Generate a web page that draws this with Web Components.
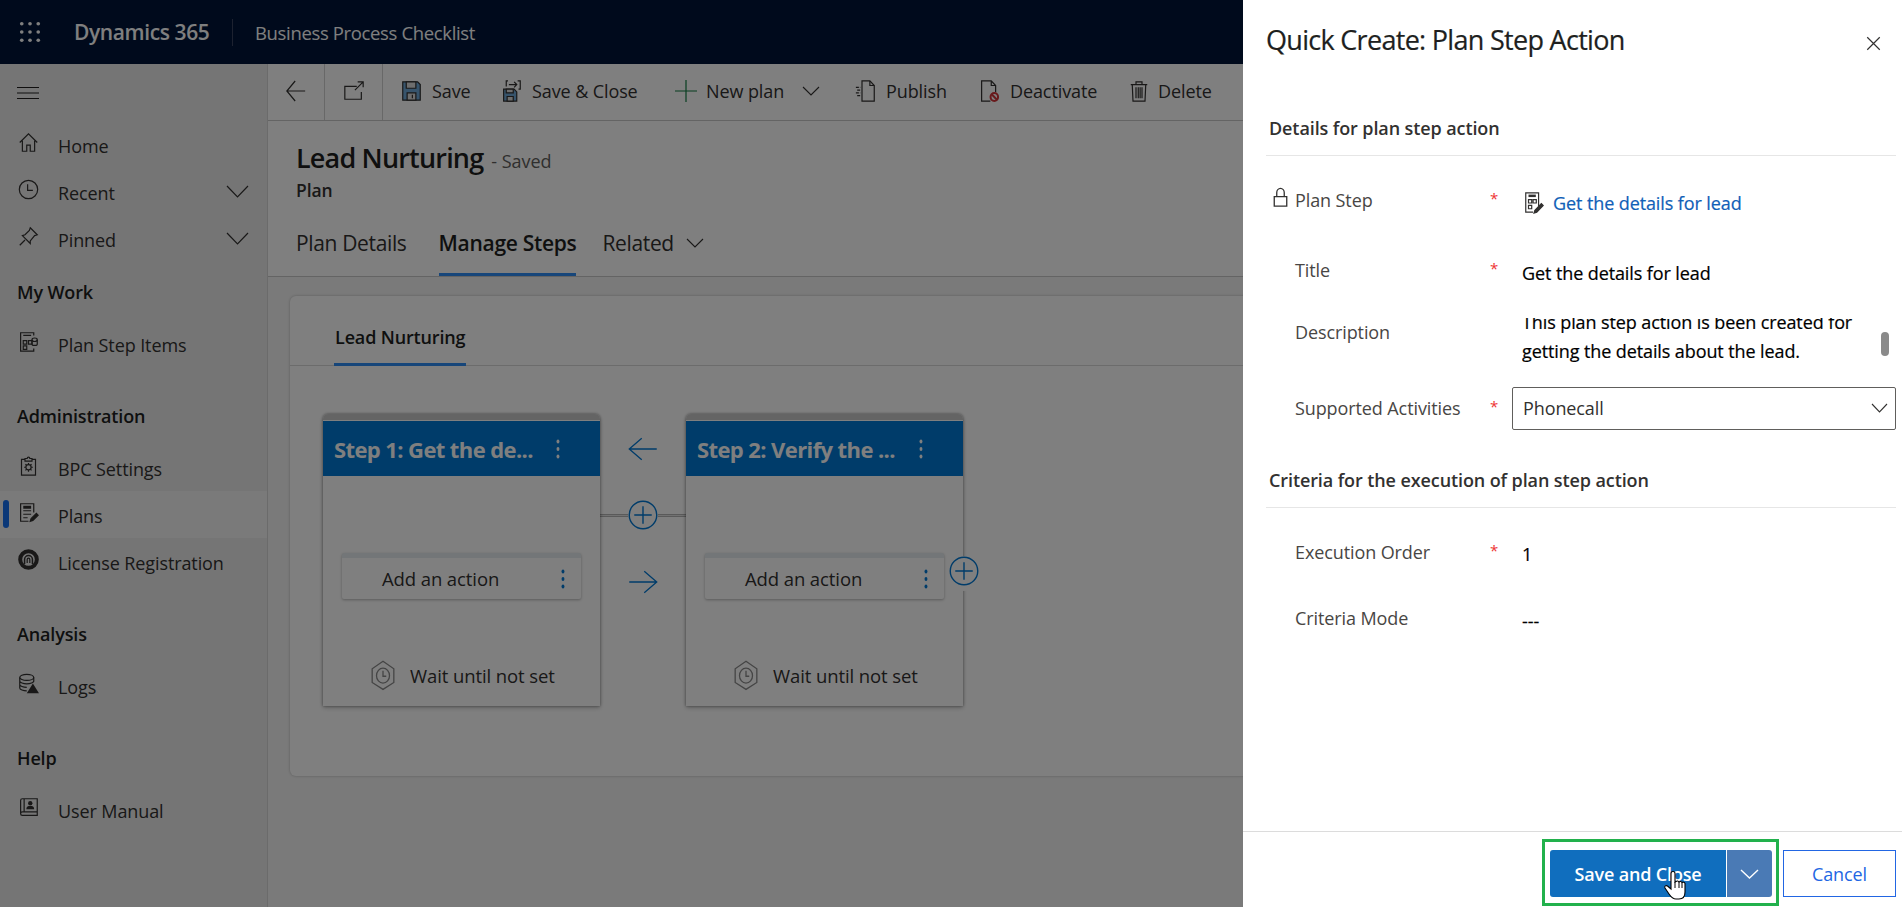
<!DOCTYPE html>
<html lang="en">
<head>
<meta charset="utf-8">
<title>Business Process Checklist</title>
<style>
    html, body { margin: 0; height: 100%; overflow: hidden; }
    body { font-family: "Open Sans", "Noto Sans", sans-serif; color: #323130; }
</style>
</head>
<body>
<dyn-shell>
    <dyn-header slot="header"></dyn-header>
    <dyn-nav slot="nav">
        <nav-item icon="home">Home</nav-item>
        <nav-item icon="recent" chevron>Recent</nav-item>
        <nav-item icon="pin" chevron>Pinned</nav-item>
        <nav-group first label="My Work">
            <nav-item icon="stepitems">Plan Step Items</nav-item>
        </nav-group>
        <nav-group label="Administration">
            <nav-item icon="settings">BPC Settings</nav-item>
            <nav-item icon="plans" selected>Plans</nav-item>
            <nav-item icon="license">License Registration</nav-item>
        </nav-group>
        <nav-group label="Analysis">
            <nav-item icon="logs">Logs</nav-item>
        </nav-group>
        <nav-group label="Help">
            <nav-item icon="manual">User Manual</nav-item>
        </nav-group>
    </dyn-nav>
    <dyn-main slot="main"></dyn-main>
    <quick-create slot="panel"></quick-create>
</dyn-shell>

<script>
// icon shapes, all on a 24 box
const ICONS = {
    grid: '<g fill="currentColor" stroke="none"><circle cx="3" cy="3" r="2"/><circle cx="12" cy="3" r="2"/><circle cx="21" cy="3" r="2"/><circle cx="3" cy="12" r="2"/><circle cx="12" cy="12" r="2"/><circle cx="21" cy="12" r="2"/><circle cx="3" cy="21" r="2"/><circle cx="12" cy="21" r="2"/><circle cx="21" cy="21" r="2"/></g>',
    menu: '<path d="M0 1h24M0 12h24M0 23h24"/>',
    home: '<path d="M2 12 12 2l10 10M5 10v12h5v-7h4v7h5V10"/>',
    recent: '<circle cx="12" cy="12" r="10.500"/><path d="M11 6v7h6"/>',
    pin: '<path d="M14 2 22 10 19 11 14 17 14 20 5 11 8 10 13 5ZM8 16 2 22"/>',
    chevron: '<path d="M0 0 12 24 24 0"/>',
    stepitems: '<path d="M18 5V2H3v21h15v-3"/><path d="M6 5h9M6 11h4v4H6zM12 11h4v4h-4zM6 17h4v4H6z"/><ellipse cx="19" cy="10" rx="3" ry="2"/><path d="M16 10v5c0 2 6 2 6 0v-5"/>',
    settings: '<path d="M8 5H4v18h16V5h-4"/><path d="M8 7V4h2.500a1.500 1.500 0 0 1 3 0H16v3z"/><circle cx="12" cy="14" r="3"/><path d="M12 9v2M12 17v2M7 14h2M15 14h2M8.500 10.500l1.400 1.400M14.100 16.100l1.400 1.400M8.500 17.500l1.400-1.400M14.100 11.900l1.400-1.400"/>',
    plans: '<path d="M18 12V2H3v20h9"/><path d="M6 6h9" stroke-width="3"/><path d="M6 10h9M6 14h9M6 18h5"/><path d="M14 22l1-3 6-6 2 2-6 6z" fill="currentColor"/>',
    license: '<circle cx="12" cy="12" r="9.500" stroke-width="4"/><path d="M7.500 17v-5a4.500 4.500 0 0 1 9 0v5" stroke-width="1.500"/><path d="M10.500 16v-4a1.500 1.500 0 0 1 3 0v4" stroke-width="1.200"/>',
    logs: '<ellipse cx="10" cy="5" rx="8" ry="3.500"/><path d="M2 5v12c0 2 4 3.500 8 3.500M18 5v5M2 9c0 2 4 3.500 8 3.500s8-1.500 8-3.500M2 13c0 2 4 3.500 8 3.500"/><path d="M17 12l7 11H10z" fill="currentColor" stroke="none"/>',
    manual: '<path d="M5 2h17v19H5a2 2 0 0 1-2-2V4a2 2 0 0 1 2-2zM3 19a2 2 0 0 1 2-2h17M7 2v15"/><circle cx="14" cy="7" r="2.500" fill="currentColor" stroke="none"/><path d="M9.500 14c0-3 2-4 4.500-4s4.500 1 4.500 4z" fill="currentColor" stroke="none"/>',
    back: '<path d="M23 12H1M11 2 1 12l10 10"/>',
    forward: '<path d="M1 12h22M13 2l10 10-10 10"/>',
    popout: '<path d="M15 7H2v14h18v-8"/><path d="M13 11 22 2M16 2h6v6"/>',
    save: '<path d="M2 2h17l3 3v17H2z" fill="#6fa8d8"/><path d="M6 2h11v7H6z" fill="#dcdcdc"/><path d="M7 22v-8h10v8z" fill="#dcdcdc"/><path d="M13 16v4"/>',
    saveclose: '<path d="M3 10h12l3 3v10H3z" fill="#6fa8d8"/><path d="M6 10h8v4H6zM7 23v-5h7v5z" fill="#dcdcdc"/><path d="M9 5h9M15 2l3 3-3 3M19 1h3v9h-2M8 1H6v6"/>',
    plus: '<path d="M12 0v24M0 12h24"/>',
    publish: '<path d="M8 1h9l5 5v17H8z"/><path d="M17 1v5h5"/><path d="M1 8h5M2.500 11h3.500M1 14h5M2.500 17h3.500" stroke-dasharray="3 1"/>',
    deactivate: '<path d="M13 23H3V1h11l5 5v7M14 1v5h5"/><circle cx="17.500" cy="18.500" r="4.300" stroke="#d13438" stroke-width="2"/><path d="M14.500 15.500l6 6" stroke="#d13438" stroke-width="2"/>',
    trash: '<path d="M1 5h22M8 5V2h8v3M3 5l1 18h16l1-18M8 8v12M11 8v12M13.500 8v12M16 8v12"/>',
    lock: '<path d="M2 11h20v12H2zM6 11V6a6 5.500 0 0 1 12 0v5"/>',
    close: '<path d="M2 2l20 20M22 2 2 22"/>',
    record: '<path d="M17 15V1H3v20h8"/><path d="M6 4h8" stroke-width="2.500"/><path d="M6 8h3.500v3.500H6zM11 8h3.500v3.500H11zM6 14h3.500v3.500H6z"/><path d="M12 22l1-3 7-7 2 2-7 7z" fill="currentColor"/>',
    hex: '<path d="M12 1 22 7v11l-10 5.500L2 18V7z"/><circle cx="12" cy="12.500" r="6"/><path d="M12 8.500v4.500h3"/>',
    dots: '<g fill="currentColor" stroke="none"><circle cx="12" cy="3" r="2.500"/><circle cx="12" cy="12" r="2.500"/><circle cx="12" cy="21" r="2.500"/></g>',
    addcircle: '<circle cx="12" cy="12" r="11"/><path d="M12 5v14M5 12h14"/>'
};

class DynIcon extends HTMLElement {
    connectedCallback() {
        const w = this.getAttribute('w') || 22;
        const h = this.getAttribute('h') || w;
        const sw = this.getAttribute('sw') || 1.2;
        this.attachShadow({ mode: 'open' });
        this.shadowRoot.innerHTML = `
            <style>
                :host { display: inline-flex; flex: none; }
                svg { display: block; overflow: visible; }
                svg * { vector-effect: non-scaling-stroke; } /* icons get stretched, keep the line even */
            </style>
            <svg width="${w}" height="${h}" viewBox="0 0 24 24" preserveAspectRatio="none" fill="none" stroke="currentColor" stroke-width="${sw}">${ICONS[this.getAttribute('name')] || ''}</svg>`;
    }
}
customElements.define('dyn-icon', DynIcon);

class DynShell extends HTMLElement {
    constructor() {
        super();
        this.attachShadow({ mode: 'open' });
        this.shadowRoot.innerHTML = `
            <style>
                :host { display: flex; flex-direction: column; position: relative; width: 1902px; height: 907px; overflow: hidden; }
                .row { display: flex; flex: 1; min-height: 0; }
                .dim { position: absolute; inset: 0; background: rgba(0, 0, 0, .5); }
                .panel { position: absolute; top: 0; right: 0; bottom: 0; width: 659px; }
            </style>
            <slot name="header"></slot>
            <div class="row"><slot name="nav"></slot><slot name="main"></slot></div>
            <div class="dim"></div>
            <div class="panel"><slot name="panel"></slot></div>`;
    }
}
customElements.define('dyn-shell', DynShell);

class DynHeader extends HTMLElement {
    constructor() {
        super();
        this.attachShadow({ mode: 'open' });
        this.shadowRoot.innerHTML = `
            <style>
                :host { display: flex; align-items: center; height: 64px; background: #001538; color: #fff; }
                dyn-icon { margin: 0 33px 0 19px; }
                .brand { font-size: 21px; font-weight: 600; letter-spacing: -.4px; width: 137px; white-space: nowrap; }
                .sep { width: 1px; height: 27px; background: #3a4560; margin: 0 22px 0 21px; }
                .app { font-size: 18.500px; letter-spacing: -.35px; white-space: nowrap; }
            </style>
            <dyn-icon name="grid" w="22"></dyn-icon>
            <span class="brand">Dynamics 365</span>
            <span class="sep"></span>
            <span class="app">Business Process Checklist</span>`;
    }
}
customElements.define('dyn-header', DynHeader);

class DynNav extends HTMLElement {
    constructor() {
        super();
        this.attachShadow({ mode: 'open' });
        this.shadowRoot.innerHTML = `
            <style>
                :host { display: block; flex: none; width: 267px; background: #ebebeb; border-right: 1px solid #d6d6d6; }
                .burger { height: 57px; display: flex; align-items: center; padding-left: 17px; box-sizing: border-box; color: #201f1e; }
            </style>
            <div class="burger"><dyn-icon name="menu" w="22" h="12" sw="1.200"></dyn-icon></div>
            <slot></slot>`;
    }
}
customElements.define('dyn-nav', DynNav);

class NavGroup extends HTMLElement {
    constructor() {
        super();
        this.attachShadow({ mode: 'open' });
        this.shadowRoot.innerHTML = `
            <style>
                :host { display: block; margin-top: 20px; }
                :host([first]) { margin-top: 1px; }
                .label { height: 57px; line-height: 59px; padding-left: 17px; font-size: 18px; font-weight: 600; letter-spacing: -.15px; color: #201f1e; }
            </style>
            <div class="label"></div>
            <slot></slot>`;
    }
    connectedCallback() {
        this.shadowRoot.querySelector('.label').textContent = this.getAttribute('label');
    }
}
customElements.define('nav-group', NavGroup);

class NavItem extends HTMLElement {
    constructor() {
        super();
        this.attachShadow({ mode: 'open' });
        this.shadowRoot.innerHTML = `
            <style>
                :host { display: flex; align-items: center; position: relative; height: 47px; font-size: 18px; letter-spacing: -.1px; color: #323130; }
                :host([selected]) { background: #f5f5f5; }
                :host([selected]) .bar { position: absolute; left: 3px; top: 9px; width: 6px; height: 28px; border-radius: 3px; background: #1670f0; }
                .ic { margin-left: 18px; width: 40px; flex: none; }
                .text { flex: 1; white-space: nowrap; padding-top: 2px; }
                .chev { margin-right: 19px; }
            </style>
            <span class="bar"></span>
            <span class="ic"></span>
            <span class="text"><slot></slot></span>`;
    }
    connectedCallback() {
        this.shadowRoot.querySelector('.ic').innerHTML = `<dyn-icon name="${this.getAttribute('icon')}" w="21" sw="1.200"></dyn-icon>`;
        if (this.hasAttribute('chevron')) {
            this.shadowRoot.innerHTML += '<dyn-icon class="chev" name="chevron" w="21" h="11" sw="1.200"></dyn-icon>';
        }
    }
}
customElements.define('nav-item', NavItem);

class CmdButton extends HTMLElement {
    constructor() {
        super();
        this.attachShadow({ mode: 'open' });
        this.shadowRoot.innerHTML = `
            <style>
                :host { display: flex; align-items: center; flex: none; box-sizing: border-box; padding: 0 0 2px 18px; height: 100%; font-size: 18px; letter-spacing: -.1px; white-space: nowrap; color: #323130; }
                .ic { display: inline-flex; margin-right: 10px; }
                .chev { margin-left: 19px; display: inline-flex; }
            </style>
            <span class="ic"></span><slot></slot><span class="chev"></span>`;
    }
    connectedCallback() {
        const ic = this.getAttribute('icon');
        const color = this.getAttribute('tint') || 'currentColor';
        this.style.width = (this.getAttribute('w') || 100) + 'px';
        this.shadowRoot.querySelector('.ic').innerHTML = `<dyn-icon name="${ic}" w="${this.getAttribute('iw') || 21}" h="22" sw="1.200" style="color:${color}"></dyn-icon>`;
        if (this.hasAttribute('menu')) {
            this.shadowRoot.querySelector('.ic').style.marginRight = '9px';
            this.shadowRoot.querySelector('.chev').innerHTML = '<dyn-icon name="chevron" w="16" h="8" sw="1.100"></dyn-icon>';
        }
    }
}
customElements.define('cmd-button', CmdButton);

class StepCard extends HTMLElement {
    constructor() {
        super();
        this.attachShadow({ mode: 'open' });
        this.shadowRoot.innerHTML = `
            <style>
                :host { display: flex; flex-direction: column; position: relative; flex: none; box-sizing: border-box; width: 277px; height: 292px; background: #fff; border-radius: 5px 5px 0 0; box-shadow: 0 0 3px rgba(0,0,0,.45), 0 2px 5px rgba(0,0,0,.2); }
                .top { height: 6px; background: #c9c9c9; border-radius: 5px 5px 0 0; flex: none; }
                .head { display: flex; align-items: center; height: 55px; margin-top: 1px; padding-left: 11px; background: #0078d4; color: #fff; font-size: 22px; font-weight: 700; letter-spacing: -.6px; flex: none; white-space: nowrap; }
                .head span { width: 217px; }
                .action { display: flex; align-items: center; box-sizing: border-box; margin: 77px 19px 0; height: 46px; border-top: 5px solid #e6ecf0; border-radius: 2px; box-shadow: 0 1px 3px rgba(0,0,0,.3); background: #fff; color: #323130; font-size: 18.500px; letter-spacing: -.1px; flex: none; }
                .action span { flex: 1; padding-left: 40px; }
                .action dyn-icon { margin-right: 11px; color: #0078d4; }
                .wait { display: flex; align-items: center; margin: 61px 0 0 47px; font-size: 18.500px; letter-spacing: -.1px; color: #323130; white-space: nowrap; }
                .wait dyn-icon { margin-right: 14px; color: #8a8a8a; }
                .more { position: absolute; right: -16px; top: 142px; color: #0078d4; background: #fff; border-radius: 50%; display: none; }
                :host([last]) .more { display: block; }
            </style>
            <div class="top"></div>
            <div class="head"><span class="t"></span><dyn-icon name="dots" w="14" h="20"></dyn-icon></div>
            <div class="action"><span>Add an action</span><dyn-icon name="dots" w="14" h="20"></dyn-icon></div>
            <div class="wait"><dyn-icon name="hex" w="26" h="30" sw="1.300"></dyn-icon><span>Wait until not set</span></div>
            <div class="more"><dyn-icon name="addcircle" w="30" sw="1.400"></dyn-icon></div>`;
    }
    connectedCallback() {
        this.shadowRoot.querySelector('.t').textContent = this.getAttribute('title');
    }
}
customElements.define('step-card', StepCard);

class DynMain extends HTMLElement {
    constructor() {
        super();
        this.attachShadow({ mode: 'open' });
        this.shadowRoot.innerHTML = `
            <style>
                :host { display: flex; flex-direction: column; flex: 1; min-width: 0; background: #f5f5f5; }
                .bar { display: flex; align-items: center; height: 56px; border-bottom: 1px solid #c8c8c8; background: #fff; flex: none; }
                .nav { display: flex; align-items: center; justify-content: center; height: 100%; padding-bottom: 2px; border-right: 1px solid #d0d0d0; color: #323130; box-sizing: border-box; }
                .head { background: #fff; height: 156px; box-sizing: border-box; border-bottom: 1px solid #c8c8c8; padding-left: 28px; flex: none; }
                .title { display: flex; align-items: baseline; height: 36px; padding-top: 18px; }
                h1 { margin: 0; font-size: 27px; font-weight: 600; letter-spacing: -.82px; color: #201f1e; white-space: nowrap; }
                .saved { margin-left: 8px; font-size: 18px; letter-spacing: -.05px; color: #605e5c; }
                .sub { font-size: 17.500px; font-weight: 600; letter-spacing: -.1px; color: #323130; line-height: 24px; margin-top: 3px; }
                .tabs { display: flex; align-items: center; margin-top: 8px; height: 66px; font-size: 21px; letter-spacing: -.35px; color: #323130; white-space: nowrap; }
                .tab { height: 100%; display: flex; align-items: center; box-sizing: border-box; }
                .tab.on { font-weight: 600; border-bottom: 3px solid #2f8cf5; color: #201f1e; padding-top: 3px; margin: 0 26px 0 32px; letter-spacing: -.3px; }
                .tabs dyn-icon { margin-left: 13px; }
                .card { margin: 19px 0 0 22px; height: 480px; background: #fff; border-radius: 6px; box-shadow: 0 0 3px rgba(0,0,0,.25); }
                .inner { display: flex; height: 70px; box-sizing: border-box; border-bottom: 1px solid #d8d8d8; padding-left: 44px; }
                .inner span { height: 70px; box-sizing: border-box; border-bottom: 3px solid #2f8cf5; padding: 0 1px; line-height: 82px; font-size: 18px; font-weight: 600; letter-spacing: -.15px; color: #201f1e; }
                .steps { display: flex; margin: 48px 0 0 33px; }
                .conn { display: flex; flex-direction: column; align-items: center; flex: none; width: 86px; color: #0078d4; height: 292px;
                    background: linear-gradient(#b4b4b4 0 1px, #e4e4e4 1px 2px, #b4b4b4 2px 3px) center 100px / 100% 3px no-repeat; }
                .conn dyn-icon:nth-child(1) { margin-top: 22px; }
                .conn dyn-icon:nth-child(2) { margin-top: 38px; background: #fff; border-radius: 50%; }
                .conn dyn-icon:nth-child(3) { margin-top: 39px; }
            </style>
            <div class="bar">
                <span class="nav" style="width:57px"><dyn-icon name="back" w="20" h="24"></dyn-icon></span>
                <span class="nav" style="width:58px"><dyn-icon name="popout" w="22"></dyn-icon></span>
                <cmd-button icon="save" w="100">Save</cmd-button>
                <cmd-button icon="saveclose" w="174">Save &amp; Close</cmd-button>
                <cmd-button icon="plus" tint="#107c41" w="180" iw="22" menu>New plan</cmd-button>
                <cmd-button icon="publish" w="124">Publish</cmd-button>
                <cmd-button icon="deactivate" w="151">Deactivate</cmd-button>
                <cmd-button icon="trash" w="120" iw="18">Delete</cmd-button>
            </div>
            <div class="head">
                <div class="title"><h1>Lead Nurturing</h1><span class="saved">- Saved</span></div>
                <div class="sub">Plan</div>
                <div class="tabs">
                    <span class="tab">Plan Details</span>
                    <span class="tab on">Manage Steps</span>
                    <span class="tab">Related</span>
                    <dyn-icon name="chevron" w="16" h="8" sw="1.100"></dyn-icon>
                </div>
            </div>
            <div class="card">
                <div class="inner"><span>Lead Nurturing</span></div>
                <div class="steps">
                    <step-card title="Step 1: Get the de..."></step-card>
                    <div class="conn">
                        <dyn-icon name="back" w="30" h="26" sw="1.300"></dyn-icon>
                        <dyn-icon name="addcircle" w="30" sw="1.400"></dyn-icon>
                        <dyn-icon name="forward" w="30" h="26" sw="1.300"></dyn-icon>
                    </div>
                    <step-card last title="Step 2: Verify the ..."></step-card>
                </div>
            </div>`;
    }
}
customElements.define('dyn-main', DynMain);

class FormRow extends HTMLElement {
    constructor() {
        super();
        this.attachShadow({ mode: 'open' });
        this.shadowRoot.innerHTML = `
            <style>
                :host { display: grid; grid-template-columns: 29px 200px 27px 1fr; align-items: center; font-size: 18px; letter-spacing: -.1px; }
                .lock { color: #323130; display: flex; padding: 0 0 6px 7px; }
                .label { color: #484644; white-space: nowrap; }
                .req { color: #e33; font-size: 15px; height: 20px; line-height: 22px; margin: -6px 0 0 -5px; }
                .value { min-width: 0; }
            </style>
            <span class="lock"></span>
            <span class="label"></span>
            <span class="req"></span>
            <div class="value"><slot></slot></div>`;
    }
    connectedCallback() {
        this.style.height = this.getAttribute('h') + 'px';
        this.shadowRoot.querySelector('.label').textContent = this.getAttribute('label');
        if (this.hasAttribute('required')) this.shadowRoot.querySelector('.req').textContent = '*';
        if (this.hasAttribute('locked')) this.shadowRoot.querySelector('.lock').innerHTML = '<dyn-icon name="lock" w="15" h="19" sw="1.300"></dyn-icon>';
    }
}
customElements.define('form-row', FormRow);

class QuickCreate extends HTMLElement {
    constructor() {
        super();
        this.attachShadow({ mode: 'open' });
        this.shadowRoot.innerHTML = `
            <style>
                :host { display: flex; flex-direction: column; height: 100%; box-sizing: border-box; background: #fff; color: #000; padding: 0 6px 0 23px; }
                .top { display: flex; align-items: center; height: 84px; flex: none; padding-bottom: 3px; box-sizing: border-box; }
                h2 { flex: 1; margin: -2px 0 0; font-size: 27px; font-weight: 400; letter-spacing: -.7px; color: #201f1e; white-space: nowrap; -webkit-text-stroke: .2px #201f1e; }
                .top dyn-icon { margin: 6px 15px 0 0; color: #323130; }
                .sec { box-sizing: border-box; border-bottom: 1px solid #e6e6e6; padding-left: 3px; line-height: 32px; font-size: 18px; font-weight: 600; letter-spacing: -.1px; color: #323130; flex: none; }
                .body { flex: 1; }
                .val { font-size: 18px; letter-spacing: -.1px; color: #000; white-space: nowrap; -webkit-text-stroke: .2px currentColor; }
                .link { display: flex; align-items: center; padding-top: 6px; color: #1160b7; }
                .link dyn-icon { margin: 0 8px 0 1px; color: #323130; }
                .desc { display: flex; justify-content: space-between; height: 50px; margin-top: 22px; overflow: hidden; padding-right: 7px; }
                .desc p { margin: -10px 0 0; line-height: 29px; }
                .thumb { width: 8px; height: 24px; margin-top: 14px; border-radius: 4px; background: #8a8a8a; }
                .select { display: flex; align-items: center; justify-content: space-between; box-sizing: border-box; height: 43px; margin-left: -10px; padding: 0 8px 0 10px; border: 1px solid #605e5c; border-radius: 2px; font-size: 18px; letter-spacing: -.1px; color: #323130; }
                .foot { display: flex; flex: none; height: 76px; box-sizing: border-box; margin: 0 -6px 0 -23px; padding: 7px 6px 0 0; border-top: 1px solid #dcdcdc; justify-content: flex-end; align-items: flex-start; }
                .mark { display: flex; position: relative; box-sizing: border-box; width: 237px; height: 67px; border: 3px solid #22b14c; padding: 8px 0 0 5px; }
                .save { width: 176px; height: 47px; display: flex; align-items: center; justify-content: center; background: #106ebe; border-radius: 3px 0 0 3px; color: #fff; font-size: 18px; font-weight: 600; letter-spacing: -.15px; }
                .split { width: 45px; height: 47px; margin-left: 1px; display: flex; align-items: center; justify-content: center; background: #4a7ab5; border-radius: 0 3px 3px 0; color: #fff; }
                .hand { position: absolute; left: 118px; top: 28px; }
                .cancel { box-sizing: border-box; width: 113px; height: 47px; margin: 11px 0 0 4px; display: flex; align-items: center; justify-content: center; border: 1px solid #2266e3; color: #2266e3; font-size: 18px; letter-spacing: -.1px; }
            </style>
            <div class="top"><h2>Quick Create: Plan Step Action</h2><dyn-icon name="close" w="15" sw="1.200"></dyn-icon></div>
            <div class="body">
                <div class="sec" style="height:72px;padding-top:28px">Details for plan step action</div>
                <form-row h="88" label="Plan Step" required locked>
                    <div class="val link"><dyn-icon name="record" w="22" h="23"></dyn-icon>Get the details for lead</div>
                </form-row>
                <form-row h="52" label="Title" required><div class="val" style="padding-top:6px">Get the details for lead</div></form-row>
                <form-row h="70" label="Description">
                    <div class="val desc"><p>This plan step action is been created for<br>getting the details about the lead.</p><span class="thumb"></span></div>
                </form-row>
                <form-row h="84" label="Supported Activities" required>
                    <div class="select"><span>Phonecall</span><dyn-icon name="chevron" w="15" h="8" sw="1.100"></dyn-icon></div>
                </form-row>
                <div class="sec" style="height:58px;padding-top:14px">Criteria for the execution of plan step action</div>
                <form-row h="88" label="Execution Order" required><div class="val" style="padding-top:4px">1</div></form-row>
                <form-row h="44" label="Criteria Mode"><div class="val" style="padding-top:6px">---</div></form-row>
            </div>
            <div class="foot">
                <div class="mark">
                    <div class="save">Save and Close</div>
                    <div class="split"><dyn-icon name="chevron" w="17" h="8" sw="1.400"></dyn-icon></div>
                    <svg class="hand" width="26" height="30" viewBox="0 0 26 30"><path d="M8 15V3.500a2 2 0 0 1 4 0V12l1-.5a2 2 0 0 1 3 .5 2 2 0 0 1 3 .5 2 2 0 0 1 3 1V22c0 4-2 7-6 7h-3c-3 0-5-2-7-5l-4-6c-1-2 1-3 2.500-2L8 19z" fill="#fff" stroke="#000" stroke-width="1.100"/><path d="M12 12v6M16 12v6M19 12.500V18" stroke="#000" stroke-width="1"/></svg>
                </div>
                <div class="cancel">Cancel</div>
            </div>`;
    }
}
customElements.define('quick-create', QuickCreate);
</script>
</body>
</html>
